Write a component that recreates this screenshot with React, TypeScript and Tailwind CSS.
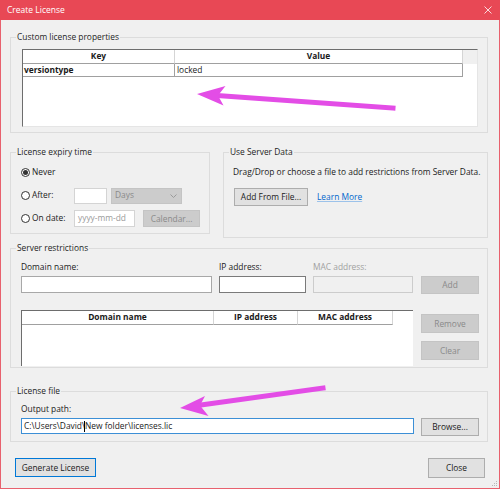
import React from "react";

function Group({ title, className = "", inner = "", children }: { title: string; className?: string; inner?: string; children: React.ReactNode }) {
  return (
    <fieldset className={`border border-[#dcdcdc] ${className}`}>
      <legend className="ml-[5px] px-[1px] leading-[12px] text-[#1e1e1e]">{title}</legend>
      <div className={inner}>{children}</div>
    </fieldset>
  );
}

function Btn({ label, className = "", disabled = false, primary = false }: { label: string; className?: string; disabled?: boolean; primary?: boolean }) {
  const tone = disabled
    ? "bg-[#cccccc] border-[#c4c4c4] text-[#8a8a8a]"
    : primary
    ? "bg-[#e1e1e1] border-[#0078d7] text-[#1a1a1a]"
    : "bg-[#e1e1e1] border-[#adadad] text-[#1a1a1a]";
  return (
    <div className={`flex items-center justify-center border leading-[12px] ${tone} ${className}`}>{label}</div>
  );
}

function Radio({ checked = false }: { checked?: boolean }) {
  return (
    <div className="w-[9px] h-[9px] rounded-full border border-[#333] flex items-center justify-center bg-white">
      {checked && <div className="w-[5px] h-[5px] rounded-full bg-[#333]" />}
    </div>
  );
}

export default function App() {
  return (
    <div className="relative w-[500px] h-[489px] flex flex-col font-['Open_Sans',sans-serif] text-[8.4px] text-[#1a1a1a] overflow-hidden">
      {/* Title bar */}
      <div className="h-[20px] bg-[#e84855] flex items-center justify-between pl-[7px] pr-[8px] text-white text-[8.5px]">
        <span>Create License</span>
        <svg width="8" height="8" viewBox="0 0 8 8" className="opacity-80">
          <path d="M0.5 0.5 L7.5 7.5 M7.5 0.5 L0.5 7.5" stroke="#fff" strokeWidth="1" />
        </svg>
      </div>

      <div className="flex-1 flex flex-col bg-[#f0f0f0] border-x border-b border-[#e8616e] pl-[9px] pr-[11px]">
        {/* Custom license properties */}
        <Group title="Custom license properties" className="mt-[11px] pt-[6px] pb-[5px]" inner="pl-[11px] pr-[9px]">
          <div className="h-[78px] bg-white border-l border-t border-l-[#6d6d6d] border-t-[#6d6d6d] border-r border-b border-r-[#e5e5e5] border-b-[#e5e5e5] flex flex-col">
            <div className="flex h-[14px] font-bold">
              <div className="w-[152px] flex items-center justify-center border-r border-r-[#d5d5d5] border-b border-b-[#a0a0a0]">Key</div>
              <div className="w-[288px] flex items-center justify-center border-r border-r-[#d5d5d5] border-b border-b-[#a0a0a0]">Value</div>
              <div className="flex-1 bg-[#f0f0f0]" />
            </div>
            <div className="flex h-[13px]">
              <div className="w-[152px] flex items-center pl-[1px] font-bold border-r border-b border-[#a0a0a0]">versiontype</div>
              <div className="w-[288px] flex items-center pl-[2px] border-r border-b border-[#a0a0a0]">locked</div>
            </div>
          </div>
        </Group>

        <div className="mt-[13px] flex items-start gap-[13px]">
          {/* License expiry time */}
          <Group title="License expiry time" className="w-[200px] pt-[6px] pb-[6px]" inner="pl-[10px]">
            <div className="flex flex-col gap-[6px]">
              <div className="h-[17px] flex items-center gap-[2px]">
                <Radio checked />
                <span>Never</span>
              </div>
              <div className="h-[17px] flex items-center">
                <div className="w-[53px] flex items-center gap-[2px]">
                  <Radio />
                  <span>After:</span>
                </div>
                <div className="w-[33px] h-[16px] bg-white border border-[#d4d4d4]" />
                <div className="ml-[4px] w-[71px] h-[16px] bg-[#cccccc] border border-[#c4c4c4] flex items-center justify-between pl-[3px] pr-[4px] text-[#8a8a8a]">
                  <span>Days</span>
                  <svg width="7" height="4" viewBox="0 0 7 4">
                    <path d="M0.5 0.5 L3.5 3.5 L6.5 0.5" fill="none" stroke="#9a9a9a" strokeWidth="1" />
                  </svg>
                </div>
              </div>
              <div className="h-[17px] flex items-center">
                <div className="w-[53px] flex items-center gap-[2px]">
                  <Radio />
                  <span>On date:</span>
                </div>
                <div className="w-[61px] h-[17px] bg-white border border-[#d4d4d4] flex items-center pl-[3px] text-[#9a9a9a]">yyyy-mm-dd</div>
                <Btn label="Calendar..." disabled className="ml-[8px] w-[57px] h-[17px]" />
              </div>
            </div>
          </Group>

          {/* Use Server Data */}
          <Group title="Use Server Data" className="flex-1 pt-[8px] pb-[31px]" inner="pl-[9px]">
            <div className="leading-[12px] whitespace-nowrap">Drag/Drop or choose a file to add restrictions from Server Data.</div>
            <div className="mt-[10px] flex items-center">
              <Btn label="Add From File..." className="ml-[1px] w-[74px] h-[18px]" />
              <span className="ml-[9px] text-[#0066cc] underline decoration-[#9cc2ea]">Learn More</span>
            </div>
          </Group>
        </div>

        {/* Server restrictions */}
        <Group title="Server restrictions" className="mt-[4px] pt-[7px] pb-[1px]" inner="pl-[10px]">
          <div className="flex items-start">
            <div className="flex flex-col w-[191px]">
              <span className="leading-[12px]">Domain name:</span>
              <div className="mt-[3px] h-[17px] bg-white border border-[#a8a8a8]" />
            </div>
            <div className="ml-[7px] flex flex-col w-[87px]">
              <span className="leading-[12px]">IP address:</span>
              <div className="mt-[3px] h-[17px] bg-white border border-[#7a7a7a]" />
            </div>
            <div className="ml-[7px] flex flex-col w-[100px]">
              <span className="leading-[12px] text-[#a0a0a0]">MAC address:</span>
              <div className="mt-[3px] h-[17px] bg-[#f0f0f0] border border-[#cccccc]" />
            </div>
            <Btn label="Add" disabled className="ml-[8px] mt-[15px] w-[58px] h-[18px]" />
          </div>
          <div className="mt-[16px] flex items-start">
            <div className="w-[392px] h-[56px] bg-white border-l border-t border-[#6d6d6d] flex flex-col">
              <div className="flex h-[14px] font-bold">
                <div className="w-[192px] flex items-center justify-center border-r border-r-[#d5d5d5] border-b border-b-[#a0a0a0]">Domain name</div>
                <div className="w-[84px] flex items-center justify-center border-r border-r-[#d5d5d5] border-b border-b-[#a0a0a0]">IP address</div>
                <div className="w-[95px] flex items-center justify-center border-r border-r-[#d5d5d5] border-b border-b-[#a0a0a0]">MAC address</div>
              </div>
            </div>
            <div className="ml-[8px] flex flex-col">
              <Btn label="Remove" disabled className="mt-[4px] w-[58px] h-[19px]" />
              <Btn label="Clear" disabled className="mt-[8px] w-[58px] h-[19px]" />
            </div>
          </div>
        </Group>

        {/* License file */}
        <Group title="License file" className="mt-[17px] pt-[6px] pb-[5px]" inner="pl-[10px]">
          <span className="block leading-[12px]">Output path:</span>
          <div className="mt-[3px] flex items-start">
            <div className="w-[393px] h-[16px] bg-white border border-[#3c8fd6] flex items-center pl-[2px] whitespace-pre">
              <span>C:\Users\David\</span>
              <span className="inline-block w-[1px] h-[11px] bg-black -ml-[1px]" />
              <span>New folder\licenses.lic</span>
            </div>
            <Btn label="Browse..." className="ml-[7px] w-[58px] h-[18px]" />
          </div>
        </Group>

        {/* Bottom buttons */}
        <div className="mt-[16px] flex items-start justify-between">
          <Btn label="Generate License" primary className="ml-[5px] w-[81px] h-[19px]" />
          <Btn label="Close" className="mr-[3px] w-[57px] h-[20px]" />
        </div>
      </div>

      {/* Resize grip */}
      <svg className="absolute right-[2px] bottom-[2px]" width="6" height="6" viewBox="0 0 6 6">
        <rect x="4" y="0" width="1" height="1" fill="#b8b8b8" />
        <rect x="2" y="2" width="1" height="1" fill="#b8b8b8" />
        <rect x="4" y="2" width="1" height="1" fill="#b8b8b8" />
        <rect x="0" y="4" width="1" height="1" fill="#b8b8b8" />
        <rect x="2" y="4" width="1" height="1" fill="#b8b8b8" />
        <rect x="4" y="4" width="1" height="1" fill="#b8b8b8" />
      </svg>

      {/* Annotation arrows */}
      <svg className="absolute inset-0 pointer-events-none" width="500" height="489" viewBox="0 0 500 489">
        <line x1="393" y1="108" x2="216" y2="95.5" stroke="#e34de6" strokeWidth="5" strokeLinecap="square" />
        <path d="M197 94 L225.5 86 L218 95.5 L223.5 105.5 Z" fill="#e34de6" />
        <line x1="323" y1="388" x2="198" y2="405.5" stroke="#e34de6" strokeWidth="5" strokeLinecap="square" />
        <path d="M180 408 L205 396 L200 405.5 L208.5 416 Z" fill="#e34de6" />
      </svg>
    </div>
  );
}
